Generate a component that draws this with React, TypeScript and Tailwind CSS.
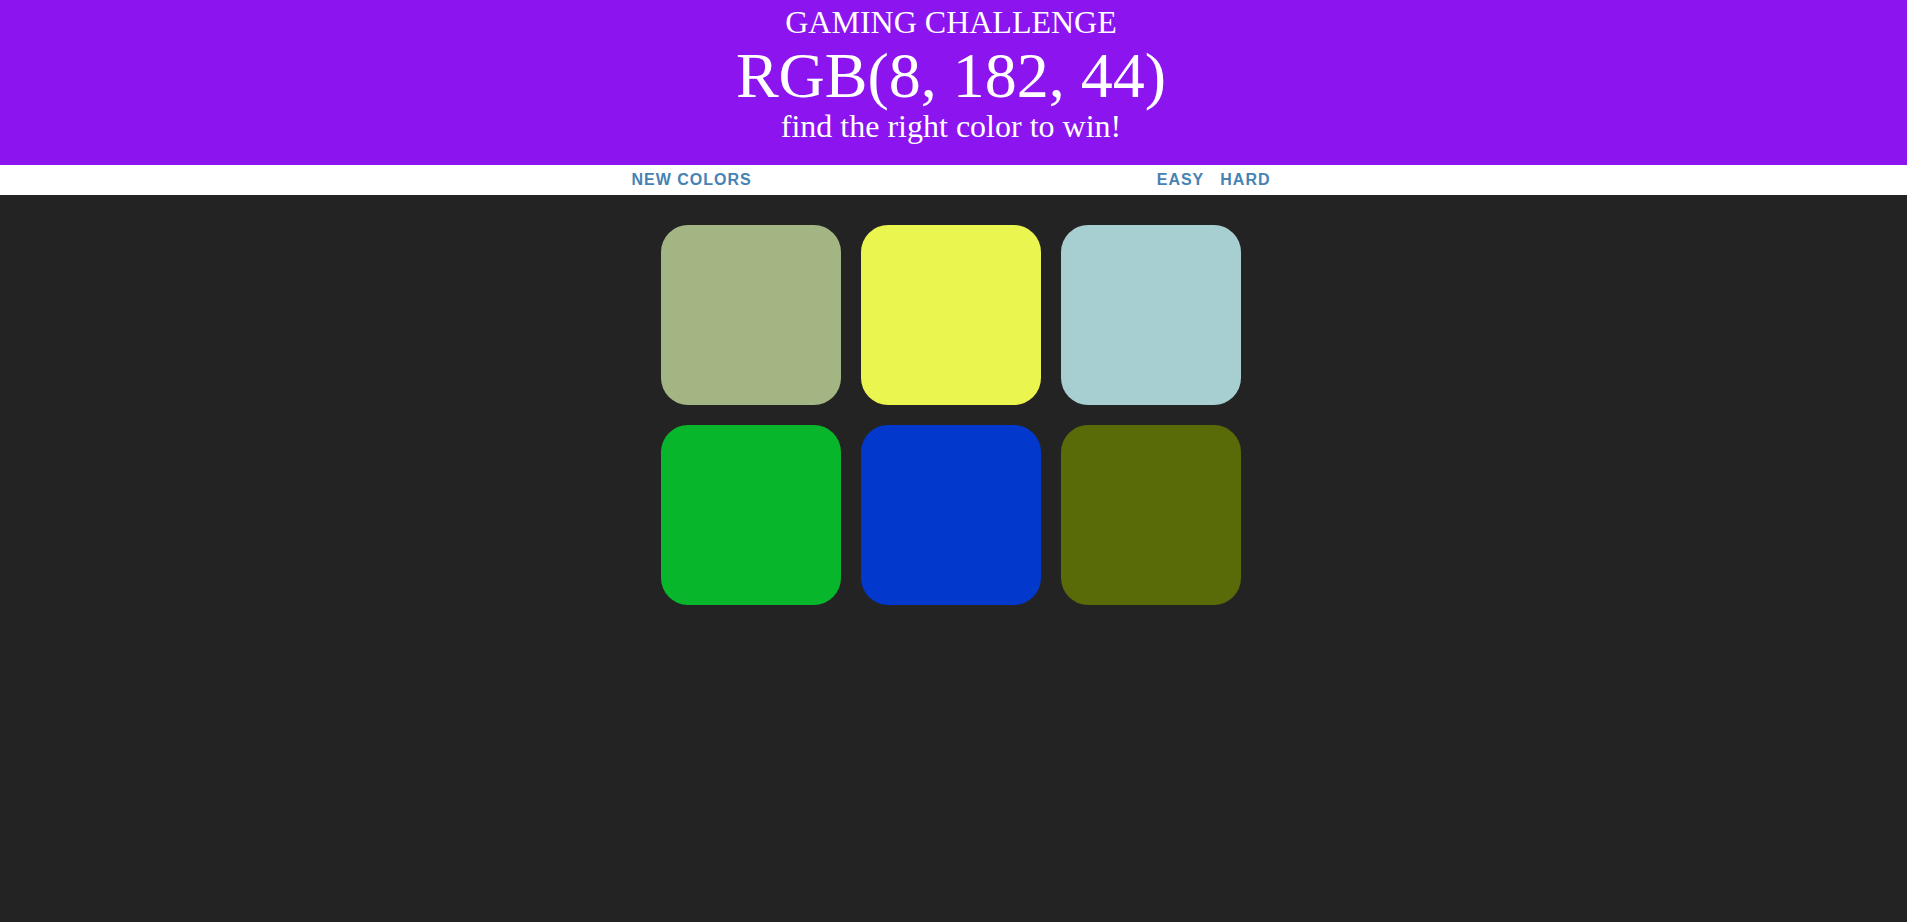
import { useState } from "react";

const squares = ["#a4b584", "#ebf54f", "#a7cfd2", "#08b62c", "#0239cc", "#596a09"];

export default function App() {
  const [colors] = useState(squares);

  return (
    <div className="h-screen overflow-hidden bg-[#232323]">
      {/* heading */}
      <div className="h-[165px] bg-[#8c15ef] pt-[4px] pr-[5px] text-center text-white font-['Liberation_Serif',serif]">
        <h1 className="text-[32px] leading-[37px] font-normal uppercase">Gaming Challenge</h1>
        <div className="text-[64px] leading-[69px]">RGB(8, 182, 44)</div>
        <div className="text-[32px] leading-[32px]">find the right color to win!</div>
      </div>

      {/* stripe */}
      <div className="flex h-[30px] items-center justify-center bg-white pr-[5px] font-['Liberation_Sans',Arial,sans-serif] text-[16px] font-bold uppercase tracking-[1px] text-[#4682b4]">
        <button className="uppercase">New Colors</button>
        <span className="w-[405px]"></span>
        <button className="uppercase">Easy</button>
        <button className="ml-[16px] uppercase">Hard</button>
      </div>

      {/* squares */}
      <div className="pr-[5px]">
        <div className="mx-auto mt-[30px] grid w-[580px] grid-cols-3 gap-[20px]">
          {colors.map((c, i) => (
            <div key={i} className="h-[180px] w-[180px] rounded-[27px]" style={{ backgroundColor: c }} />
          ))}
        </div>
      </div>
    </div>
  );
}
